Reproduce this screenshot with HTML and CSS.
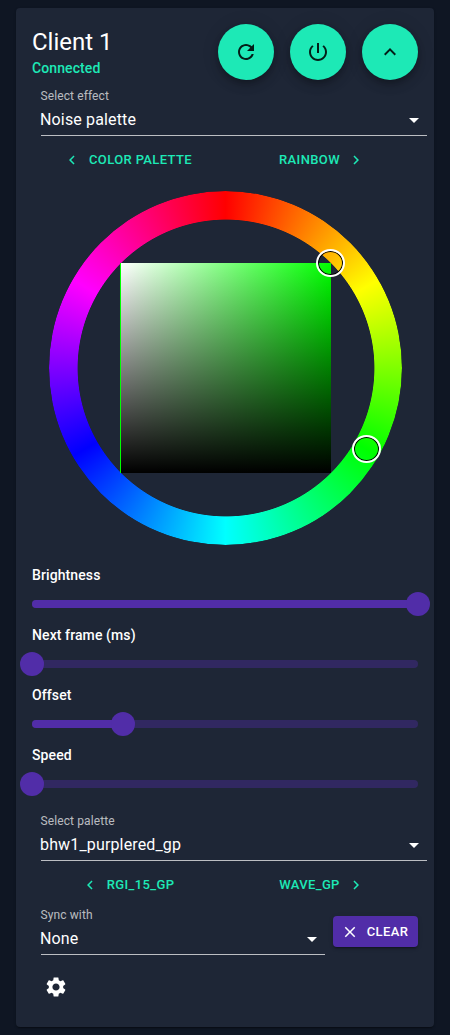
FILE: index.html
```html
<!DOCTYPE html>
<html lang="en">
<head>
<meta charset="utf-8">
<title>Client 1</title>
<link rel="stylesheet" href="styles.css">
</head>
<body>
<main class="card">
  <header class="header">
    <div class="heading">
      <h1 class="title">Client 1</h1>
      <p class="status">Connected</p>
    </div>
    <div class="actions">
      <button class="fab" aria-label="Refresh"><svg class="icon" viewBox="0 0 24 24"><path d="M17.65 6.35C16.2 4.9 14.21 4 12 4c-4.42 0-7.99 3.58-7.99 8s3.57 8 7.99 8c3.73 0 6.84-2.55 7.73-6h-2.08c-.82 2.33-3.04 4-5.65 4-3.31 0-6-2.69-6-6s2.69-6 6-6c1.66 0 3.14.69 4.22 1.78L13 11h7V4l-2.35 2.35z"/></svg></button>
      <button class="fab" aria-label="Power"><svg class="icon" viewBox="0 0 24 24"><path d="M13 3h-2v10h2V3zm4.83 2.17l-1.42 1.42C17.99 7.86 19 9.81 19 12c0 3.87-3.13 7-7 7s-7-3.13-7-7c0-2.19 1.01-4.14 2.58-5.42L6.17 5.17C4.23 6.82 3 9.26 3 12c0 4.97 4.03 9 9 9s9-4.03 9-9c0-2.74-1.23-5.18-3.17-6.83z"/></svg></button>
      <button class="fab" aria-label="Collapse"><svg class="icon" viewBox="0 0 24 24"><path d="M12 8l-6 6 1.41 1.41L12 10.83l4.59 4.58L18 14z"/></svg></button>
    </div>
  </header>

  <div class="field">
    <span class="field-label">Select effect</span>
    <div class="select"><span>Noise palette</span><svg class="icon" viewBox="0 0 24 24"><path d="M7 10l5 5 5-5z"/></svg></div>
  </div>
  <nav class="pager">
    <button class="link link-prev"><svg class="icon-small" viewBox="0 0 24 24"><path d="M15.41 7.41L14 6l-6 6 6 6 1.41-1.41L10.83 12z"/></svg>Color palette</button>
    <button class="link link-next">Rainbow<svg class="icon-small" viewBox="0 0 24 24"><path d="M10 6L8.59 7.41 13.17 12l-4.58 4.59L10 18l6-6z"/></svg></button>
  </nav>

  <div class="wheel">
    <div class="ring"></div>
    <div class="shade"></div>
    <div class="handle handle-shade"></div>
    <div class="handle handle-hue"></div>
  </div>

  <section class="slider-row">
    <h2 class="slider-label">Brightness</h2>
    <div class="slider"><div class="fill" style="width:100%"></div><div class="thumb"></div></div>
  </section>
  <section class="slider-row">
    <h2 class="slider-label">Next frame (ms)</h2>
    <div class="slider"><div class="fill" style="width:0%"></div><div class="thumb"></div></div>
  </section>
  <section class="slider-row">
    <h2 class="slider-label">Offset</h2>
    <div class="slider"><div class="fill" style="width:23.53%"></div><div class="thumb"></div></div>
  </section>
  <section class="slider-row">
    <h2 class="slider-label">Speed</h2>
    <div class="slider"><div class="fill" style="width:0%"></div><div class="thumb"></div></div>
  </section>

  <div class="field field-palette">
    <span class="field-label">Select palette</span>
    <div class="select"><span>bhw1_purplered_gp</span><svg class="icon" viewBox="0 0 24 24"><path d="M7 10l5 5 5-5z"/></svg></div>
  </div>
  <nav class="pager">
    <button class="link link-prev"><svg class="icon-small" viewBox="0 0 24 24"><path d="M15.41 7.41L14 6l-6 6 6 6 1.41-1.41L10.83 12z"/></svg>rgi_15_gp</button>
    <button class="link link-next">wave_gp<svg class="icon-small" viewBox="0 0 24 24"><path d="M10 6L8.59 7.41 13.17 12l-4.58 4.59L10 18l6-6z"/></svg></button>
  </nav>

  <div class="sync">
    <div class="field field-sync">
      <span class="field-label">Sync with</span>
      <div class="select"><span>None</span><svg class="icon" viewBox="0 0 24 24"><path d="M7 10l5 5 5-5z"/></svg></div>
    </div>
    <button class="clear"><svg class="icon-small" viewBox="0 0 24 24"><path d="M19 6.41L17.59 5 12 10.59 6.41 5 5 6.41 10.59 12 5 17.59 6.41 19 12 13.41 17.59 19 19 17.59 13.41 12z"/></svg>Clear</button>
  </div>
  <button class="settings" aria-label="Settings"><svg class="icon" viewBox="0 0 24 24"><path d="M19.14 12.94c.04-.3.06-.61.06-.94 0-.32-.02-.64-.07-.94l2.03-1.58c.18-.14.23-.41.12-.61l-1.92-3.32c-.12-.22-.37-.29-.59-.22l-2.39.96c-.5-.38-1.03-.7-1.62-.94l-.36-2.54c-.04-.24-.24-.41-.48-.41h-3.84c-.24 0-.43.17-.47.41l-.36 2.54c-.59.24-1.13.57-1.62.94l-2.39-.96c-.22-.08-.47 0-.59.22L2.74 8.87c-.12.21-.08.47.12.61l2.03 1.58c-.05.3-.09.63-.09.94s.02.64.07.94l-2.03 1.58c-.18.14-.23.41-.12.61l1.92 3.32c.12.22.37.29.59.22l2.39-.96c.5.38 1.03.7 1.62.94l.36 2.54c.05.24.24.41.48.41h3.84c.24 0 .44-.17.47-.41l.36-2.54c.59-.24 1.13-.56 1.62-.94l2.39.96c.22.08.47 0 .59-.22l1.92-3.32c.12-.22.07-.47-.12-.61l-2.01-1.58zM12 15.6c-1.98 0-3.6-1.62-3.6-3.6s1.62-3.6 3.6-3.6 3.6 1.62 3.6 3.6-1.62 3.6-3.6 3.6z"/></svg></button>
</main>
</body>
</html>
```
FILE: styles.css
```css
* {
  box-sizing: border-box;
}

body {
  margin: 0;
  padding: 8px 16px;
  background: #0f1623;
  color: #fff;
  font-family: Roboto, "Liberation Sans", sans-serif;
}

button {
  padding: 0;
  border: 0;
  background: none;
  color: inherit;
  font: inherit;
}

h1,
h2,
p {
  margin: 0;
}

.card {
  height: 1019px;
  padding: 16px;
  border-radius: 4px;
  background: #1e2636;
  box-shadow: 0 2px 1px -1px rgba(0, 0, 0, .2), 0 1px 1px rgba(0, 0, 0, .14), 0 1px 3px rgba(0, 0, 0, .12);
}

.icon {
  display: block;
  width: 24px;
  height: 24px;
  fill: currentColor;
}

.icon-small {
  display: block;
  width: 18px;
  height: 18px;
  fill: currentColor;
}

.header {
  display: flex;
  justify-content: space-between;
  height: 64px;
}

.title {
  padding-top: 2px;
  font-size: 24px;
  font-weight: 400;
  line-height: 32px;
}

.status {
  color: #1de9b6;
  font-size: 14px;
  font-weight: 500;
  letter-spacing: .1px;
  line-height: 20px;
}

.actions {
  display: flex;
  gap: 16px;
}

.fab {
  display: grid;
  place-items: center;
  width: 56px;
  height: 56px;
  border-radius: 50%;
  background: #1de9b6;
  color: rgba(0, 0, 0, .87);
  box-shadow: 0 3px 5px -1px rgba(0, 0, 0, .2), 0 6px 10px rgba(0, 0, 0, .14), 0 1px 18px rgba(0, 0, 0, .12);
}

.field {
  width: 387px;
  height: 48px;
  margin-left: 8px;
  padding-left: 1px;
}

.field-label {
  display: block;
  height: 16px;
  margin-left: -.5px;
  color: rgba(255, 255, 255, .7);
  font-size: 12px;
  letter-spacing: .11px;
  line-height: 16px;
}

.select {
  display: flex;
  justify-content: space-between;
  align-items: center;
  height: 32px;
  border-bottom: 1px solid rgba(255, 255, 255, .7);
  font-size: 16px;
  letter-spacing: .15px;
}

.select span {
  margin-left: -1px;
}

.select .icon {
  margin-right: 1px;
}

.pager {
  display: grid;
  grid-template-columns: 1fr 1fr;
  height: 47px;
}

.link {
  display: flex;
  justify-content: center;
  align-items: center;
  gap: 8px;
  color: #1de9b6;
  font-size: 13px;
  font-weight: 500;
  letter-spacing: .37px;
  text-transform: uppercase;
}

.link-prev .icon-small {
  margin-left: -2px;
}

.link-next .icon-small {
  margin: 0 -1.5px 0 -.5px;
}

.wheel {
  position: relative;
  width: 353px;
  height: 354px;
  margin: 8px 0 0 17px;
}

.ring {
  height: 100%;
  border-radius: 50%;
  background: conic-gradient(#f00, #ff0, #0f0, #0ff, #00f, #f0f, #f00);
  -webkit-mask: radial-gradient(circle at 177px 177px, transparent 148px, #000 148.8px);
  mask: radial-gradient(circle at 177px 177px, transparent 148px, #000 148.8px);
}

.shade {
  position: absolute;
  left: 71px;
  top: 72px;
  width: 211px;
  height: 210px;
  border-left: 1px solid #0f0;
  background: linear-gradient(to top, #000, transparent), linear-gradient(to right, #fff, #0f0);
}

.handle {
  position: absolute;
  width: 29px;
  height: 28px;
  border: 2px solid #fff;
  border-radius: 50%;
  box-shadow: inset 0 0 0 1px #000;
}

.handle-shade {
  left: 267px;
  top: 58px;
}

.handle-hue {
  left: 303px;
  top: 244px;
}

.slider-row {
  height: 60px;
}

.wheel + .slider-row {
  margin-top: 20px;
}

.slider-label {
  font-size: 14px;
  font-weight: 500;
  letter-spacing: .1px;
  line-height: 20px;
}

.slider {
  display: flex;
  align-items: center;
  height: 8px;
  margin-top: 15px;
  border-radius: 4px;
  background: rgba(81, 45, 168, .38);
}

.fill {
  height: 8px;
  border-radius: 4px;
  background: #512da8;
}

.thumb {
  flex: none;
  width: 24px;
  height: 24px;
  margin: 0 -12px;
  border-radius: 50%;
  background: #512da8;
}

.field-palette {
  margin-top: 8px;
}

.sync {
  display: flex;
  gap: 8px;
  height: 56px;
  margin-top: -1px;
}

.field-sync {
  width: 285px;
}

.clear {
  display: flex;
  justify-content: center;
  align-items: center;
  gap: 8px;
  width: 85px;
  height: 31px;
  margin-top: 9px;
  border-radius: 4px;
  background: #512da8;
  box-shadow: 0 3px 1px -2px rgba(0, 0, 0, .2), 0 2px 2px rgba(0, 0, 0, .14), 0 1px 5px rgba(0, 0, 0, .12);
  font-size: 13px;
  font-weight: 500;
  letter-spacing: .37px;
  text-transform: uppercase;
}

.clear .icon-small {
  margin-left: -2px;
}

.settings {
  display: grid;
  place-items: center;
  width: 48px;
  height: 48px;
}
```
